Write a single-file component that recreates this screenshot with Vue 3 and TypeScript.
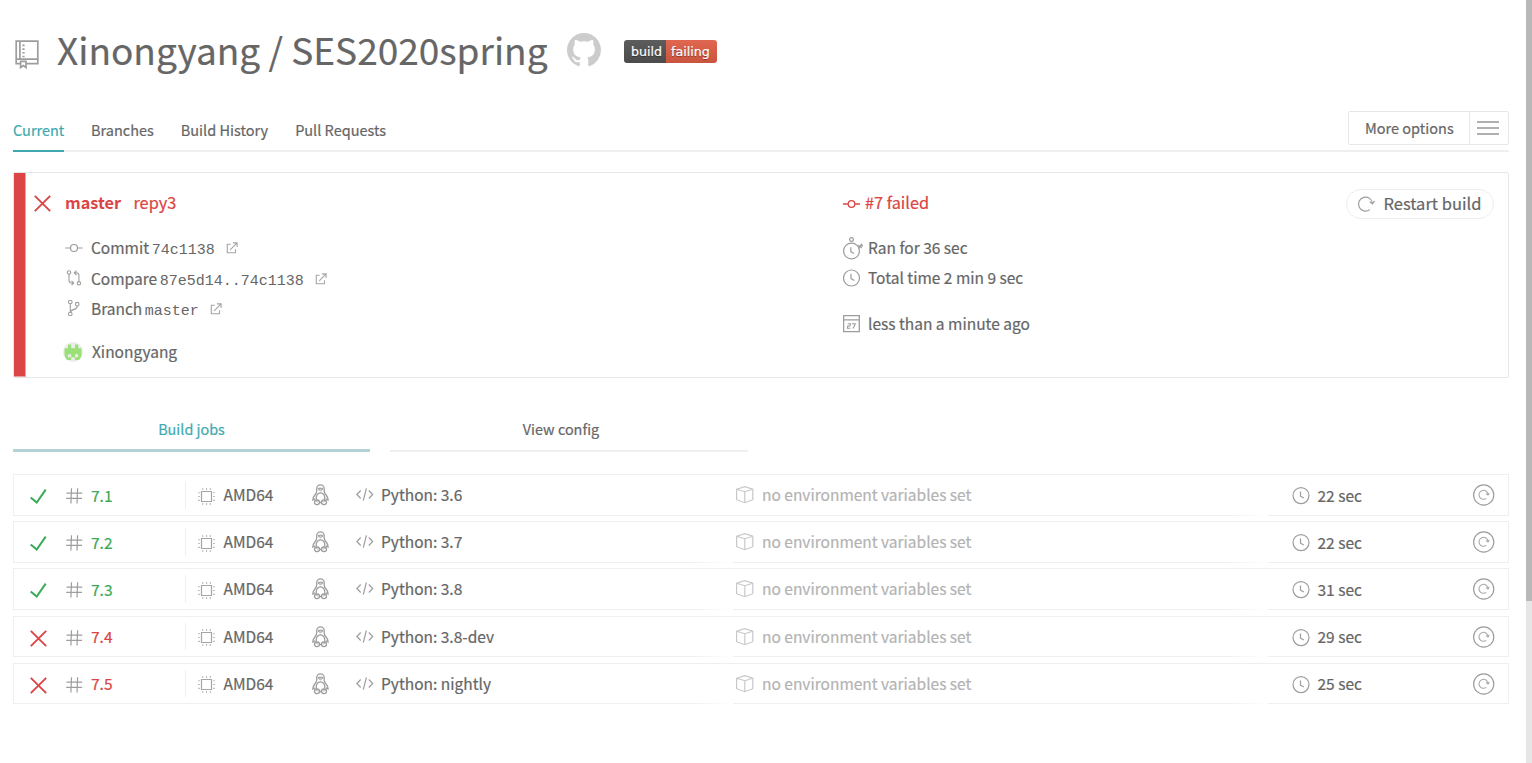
<script setup lang="ts">
interface Job {
  id: string
  passed: boolean
  language: string
  duration: string
}

const tabs: string[] = ['Current', 'Branches', 'Build History', 'Pull Requests']

const jobs: Job[] = [
  { id: '7.1', passed: true, language: 'Python: 3.6', duration: '22 sec' },
  { id: '7.2', passed: true, language: 'Python: 3.7', duration: '22 sec' },
  { id: '7.3', passed: true, language: 'Python: 3.8', duration: '31 sec' },
  { id: '7.4', passed: false, language: 'Python: 3.8-dev', duration: '29 sec' },
  { id: '7.5', passed: false, language: 'Python: nightly', duration: '25 sec' },
]

interface Source {
  kind: 'commit' | 'compare' | 'branch'
  label: string
  value: string
}

const sources: Source[] = [
  { kind: 'commit', label: 'Commit', value: '74c1138' },
  { kind: 'compare', label: 'Compare', value: '87e5d14..74c1138' },
  { kind: 'branch', label: 'Branch', value: 'master' },
]
</script>

<template>
  <div class="page">
    <main class="content">
      <header class="repo">
        <svg class="repo-icon" width="24" height="29" viewBox="0 0 24 29">
          <g fill="none" stroke="#9d9d9d" stroke-width="1.7">
            <path d="M5.5 23.7H1.2V1.2h21.6v22.5H11.5M1.2 19.2h21.6M4.9 1.2v18" />
            <path d="M5.6 21.3h5.4v6.2l-2.7-2-2.7 2z" />
            <path d="M8.500 4.600v13" stroke-dasharray="1.6 2.1" stroke-width="2.2" />
          </g>
        </svg>
        <h1>Xinongyang / SES2020spring</h1>
        <svg class="octocat" width="34" height="34" viewBox="0 0 16 16">
          <path fill="#ccc" d="M8 0C3.58 0 0 3.58 0 8c0 3.54 2.29 6.53 5.47 7.59.4.07.55-.17.55-.38 0-.19-.01-.82-.01-1.49-2.01.37-2.53-.49-2.69-.94-.09-.23-.48-.94-.82-1.13-.28-.15-.68-.52-.01-.53.63-.01 1.08.58 1.23.82.72 1.21 1.87.87 2.33.66.07-.52.28-.87.51-1.07-1.78-.2-3.64-.89-3.64-3.95 0-.87.31-1.59.82-2.15-.08-.2-.36-1.02.08-2.12 0 0 .67-.21 2.2.82.64-.18 1.32-.27 2-.27s1.36.09 2 .27c1.53-1.04 2.2-.82 2.2-.82.44 1.1.16 1.92.08 2.12.51.56.82 1.27.82 2.15 0 3.07-1.87 3.75-3.65 3.95.29.25.54.73.54 1.48 0 1.07-.01 1.93-.01 2.2 0 .21.15.46.55.38A8.01 8.01 0 0 0 16 8c0-4.42-3.58-8-8-8z" />
        </svg>
        <span class="badge"><span class="badge-key">build</span><span class="badge-value">failing</span></span>
      </header>

      <nav class="tabs">
        <a v-for="(tab, i) in tabs" :key="tab" class="tab" :class="{ active: i === 0 }">{{ tab }}</a>
        <div class="options">
          <span class="options-label">More options</span>
          <span class="burger"><i /><i /><i /></span>
        </div>
      </nav>

      <section class="card">
        <div class="stripe" />
        <svg class="card-status" width="17" height="17" viewBox="0 0 17 17">
          <path d="M.8.8l15.4 15.4M16.2.8L.8 16.2" fill="none" stroke="#db4545" stroke-width="1.9" />
        </svg>
        <div class="card-left">
          <div class="line headline"><b>master</b><span>repy3</span></div>
          <div v-for="s in sources" :key="s.kind" class="line source" :class="s.kind">
            <span class="slot">
              <svg v-if="s.kind === 'commit'" width="18" height="16" viewBox="0 0 18 16">
                <g fill="none" stroke="#9d9d9d" stroke-width="1.2"><circle cx="9" cy="8" r="3.5" /><path d="M.2 8h5.3M12.5 8h5.2" /></g>
              </svg>
              <svg v-else-if="s.kind === 'compare'" width="18" height="16" viewBox="0 0 18 16">
                <g fill="none" stroke="#9d9d9d" stroke-width="1.1">
                  <circle cx="4" cy="2.5" r="1.7" /><circle cx="13.9" cy="13.3" r="1.7" />
                  <path d="M4 4.2v6.3q0 2.5 2.8 2.5h1.6M6.5 10.8l2.2 2.2-2.2 2.2M13.9 11.6V5.3q0-2.5-2.8-2.5H9.5M11.5.6L9.3 2.8l2.2 2.2" />
                </g>
              </svg>
              <svg v-else width="18" height="18" viewBox="0 0 18 18">
                <g fill="none" stroke="#9d9d9d" stroke-width="1.1">
                  <circle cx="5.3" cy="3" r="1.8" /><circle cx="5.3" cy="15" r="1.8" /><circle cx="12.2" cy="5.2" r="1.8" />
                  <path d="M5.3 4.8v8.4M12.2 7q0 2.7-3.2 3.4t-3.4 2.8" />
                </g>
              </svg>
            </span>
            <span>{{ s.label }}</span><code>{{ s.value }}</code>
            <svg class="external" width="12" height="12" viewBox="0 0 12 12">
              <path d="M4.7 2.2H1.3v8.6h8.2V7.3M4.2 7.8l6.600-6.600M6.900.900h4.200v4.200" fill="none" stroke="#a5a5a5" stroke-width="1.1" />
            </svg>
          </div>
          <div class="line user">
            <svg class="avatar" width="20" height="20" viewBox="0 0 20 20">
              <circle cx="10" cy="10" r="10" fill="#ececec" />
              <path fill="#9bdf77" d="M5 2.500h3.200v3.800h3.800V2.500h3.200v3.800h3.300v6.700q-.6 3.300-2.600 5h-4V15.500H8.200V18H4.200q-2-1.700-2.700-5V6.300H5z" />
              <path fill="#ececec" d="M5 12.300h3.200v2.900H5zM12 12.300h3.200v2.900H12zM8.600 15.500h2.800v4H8.600z" />
            </svg>
            <span>Xinongyang</span>
          </div>
        </div>
        <div class="card-right">
          <div class="line failed">
            <svg width="18" height="16" viewBox="0 0 18 16">
              <g fill="none" stroke="#db4545" stroke-width="1.3"><circle cx="8.500" cy="8" r="3.300" /><path d="M0 8h5.200M11.800 8H17" /></g>
            </svg>
            <span>#7 failed</span>
          </div>
          <div class="line ran">
            <svg width="21" height="23" viewBox="0 0 21 23">
              <g fill="none" stroke="#9d9d9d" stroke-width="1.200">
                <circle cx="8.500" cy="14" r="7.900" /><circle cx="8.500" cy="2.500" r="1.900" />
                <path d="M7.800 10.300v4.300l3.200 1.900M15 8.300l3.800 2.700M15.500 11.300l3-4.300M18 6.800l1.500 1.500M17 9l2.800-.200" />
              </g>
            </svg>
            <span>Ran for 36 sec</span>
          </div>
          <div class="line total">
            <svg width="18" height="18" viewBox="0 0 18 18">
              <g fill="none" stroke="#9d9d9d" stroke-width="1.200"><circle cx="8.500" cy="9" r="8" /><path d="M8 4.800v4.800l3.300 1.900" /></g>
            </svg>
            <span>Total time 2 min 9 sec</span>
          </div>
          <div class="line finished">
            <svg width="18" height="18" viewBox="0 0 18 18">
              <path d="M.600.700h15.700v15.900H.600zM.600 4.900h15.700" fill="none" stroke="#9d9d9d" stroke-width="1.300" />
              <path d="M4.700 8.700h2.800l-.4 2-2.300.4-.5 2.200h3M9 8.700h3.300l-2.300 4.700" fill="none" stroke="#9d9d9d" stroke-width="1.100" />
            </svg>
            <span>less than a minute ago</span>
          </div>
        </div>
        <button class="restart">
          <svg width="18" height="18" viewBox="0 0 18 18">
            <path d="M12.800 14.600A7 7 0 1 1 15.500 8.600M12.600 6.600l2.900 2.300 2-3" fill="none" stroke="#9d9d9d" stroke-width="1.200" />
          </svg>
          <span>Restart build</span>
        </button>
      </section>

      <nav class="subtabs">
        <a class="subtab selected">Build jobs</a>
        <a class="subtab">View config</a>
      </nav>

      <ul class="jobs">
        <li v-for="job in jobs" :key="job.id" class="job" :class="job.passed ? 'passed' : 'errored'">
          <span class="cell status">
            <svg width="17" height="17" viewBox="0 0 17 17">
              <path v-if="job.passed" d="M.700 9.500l6 5L15.700 1.700" fill="none" stroke="#39aa56" stroke-width="2" />
              <path v-else d="M.800.800l15.400 15.400M16.200.800L.800 16.200" fill="none" stroke="#db4545" stroke-width="1.900" />
            </svg>
          </span>
          <span class="cell number">
            <svg width="17" height="16" viewBox="0 0 17 16">
              <path d="M5.500.300L4.900 15.500M11.600.300L11 15.500M.500 5.200h15.800M.200 10.400H16" fill="none" stroke="#9d9d9d" stroke-width="1.200" />
            </svg>
            <span>{{ job.id }}</span>
          </span>
          <span class="cell arch">
            <svg width="18" height="18" viewBox="0 0 18 18">
              <path d="M3.500 3.500h10v10h-10z" fill="none" stroke="#a5a5a5" stroke-width="1.200" />
              <g fill="none" stroke="#a5a5a5" stroke-width="1.400" stroke-dasharray="1.100 2.700">
                <path d="M4.200 1h8.900M4.200 16h8.900M1 4.200v8.900M16 4.200v8.900" />
              </g>
            </svg>
            <span>AMD64</span>
          </span>
          <span class="cell os">
            <svg width="17" height="22" viewBox="0 0 17 22">
              <g fill="none" stroke="#9d9d9d" stroke-width="1.300">
                <path d="M4.700 7.300V4.600a3.700 3.700 0 0 1 7.500 0v2.700q.4 2.300 2.200 4.200 1.800 2 1.700 4.500l-2.300-1.200M4.700 7.300q-.4 2.300-2.200 4.200Q.700 13.500.800 16l2.300-1.200" />
                <path d="M6.300 4.200h4.400v1l-2.200 1.600-2.200-1.600zM6.200 5h4.600" stroke-width="1" />
                <path d="M4.500 15.700Q3.500 12 6 9.700q2.500-1.800 5 0 2.500 2.300 1.500 6M7 18.500h3" />
                <ellipse cx="5" cy="18.300" rx="2.500" ry="2.300" /><ellipse cx="12" cy="18.300" rx="2.500" ry="2.300" />
                <path d="M4.200 16.500l1.300 1.800M12.800 16.500l-1.300 1.800" stroke-width="1" />
              </g>
            </svg>
          </span>
          <span class="cell language">
            <svg width="18" height="14" viewBox="0 0 18 14">
              <path d="M4.700 2.500L.900 6.500l3.800 4M12.800 2.500l3.900 4-3.900 4M10.400.300L7.300 12.700" fill="none" stroke="#9d9d9d" stroke-width="1.200" />
            </svg>
            <span>{{ job.language }}</span>
          </span>
          <span class="cell env">
            <svg width="18" height="18" viewBox="0 0 18 18">
              <path d="M.600 3.200L8.800.700l8 2.500v10.500l-8 3-8.200-3zM.600 3.200l8.200 2.500 8-2.500M8.800 5.700v11" fill="none" stroke="#c8c8c8" stroke-width="1.200" />
            </svg>
            <span>no environment variables set</span>
          </span>
          <span class="cell time">
            <svg width="18" height="18" viewBox="0 0 18 18">
              <g fill="none" stroke="#9d9d9d" stroke-width="1.200"><circle cx="9" cy="8.600" r="8" /><path d="M8.500 4.400v4.800l3.300 1.900" /></g>
            </svg>
            <span>{{ job.duration }}</span>
          </span>
          <span class="cell again">
            <svg width="22" height="22" viewBox="0 0 22 22">
              <g fill="none" stroke="#9d9d9d" stroke-width="1.200">
                <circle cx="10.700" cy="11" r="10.100" />
                <path d="M13.200 14.400A4.500 4.500 0 1 1 15 10.600M13 9.600l2 1.400 1.300-1.900" stroke-width="1.100" stroke="#aaa" />
              </g>
            </svg>
          </span>
        </li>
      </ul>
    </main>
    <div class="scrollbar"><div class="thumb" /></div>
  </div>
</template>

<style>
html,
body {
  margin: 0;
  background: #fff;
}
</style>

<style scoped>
.page {
  display: flex;
  height: 763px;
  overflow: hidden;
  color: #666;
  font-family: "Noto Sans CJK SC", "Noto Sans", sans-serif;
  font-size: 15.5px;
  line-height: 24px;
  -webkit-text-stroke: 0.2px currentColor;
}
.page svg {
  display: block;
  flex: none;
}
.content {
  width: 1496px;
  margin: 0 17px 0 13px;
  flex: none;
}
.scrollbar {
  width: 6px;
  background: #e6e6e6;
}
.thumb {
  height: 601px;
  background: #b8b8b8;
}

.repo {
  display: flex;
  align-items: flex-start;
  height: 92px;
  padding-top: 19px;
}
.repo-icon {
  margin: 21px 0 0 2px;
}
h1 {
  width: 510px;
  margin: 0 0 0 18px;
  font-size: 37px;
  font-weight: 400;
  line-height: 60px;
  white-space: nowrap;
}
.octocat {
  margin-top: 14px;
}
.badge {
  display: flex;
  width: 93px;
  height: 23px;
  margin: 21px 0 0 23px;
  border-radius: 3px;
  overflow: hidden;
  color: #fff;
  font: 12.6px/23px "DejaVu Sans", sans-serif;
  text-shadow: 0 1px 1px rgba(0, 0, 0, 0.4);
}
.badge-key {
  width: 35px;
  padding-left: 7px;
  background: linear-gradient(#5c5c5c, #4c4c4c);
}
.badge-value {
  flex: 1;
  padding-left: 5px;
  background: linear-gradient(#e0664f, #c9553f);
}

.tabs {
  display: flex;
  height: 39px;
  border-bottom: 2px solid #efefef;
  font-size: 14.5px;
}
.tab {
  height: 32px;
  padding-top: 7px;
  margin-right: 27px;
}
.tab.active {
  color: #3eaaaf;
  width: 51px;
  white-space: nowrap;
  border-bottom: 2px solid #3eaaaf;
}
.options {
  display: flex;
  box-sizing: border-box;
  width: 161px;
  height: 34px;
  margin-left: auto;
  border: 1px solid #e7e7e7;
  border-radius: 2px;
  font-size: 14.5px;
  line-height: 32px;
}
.options-label {
  width: 104px;
  padding-left: 16px;
  border-right: 1px solid #e7e7e7;
}
.burger {
  display: flex;
  flex-direction: column;
  gap: 4px;
  padding: 9px 0 0 7px;
}
.burger i {
  width: 22px;
  height: 2px;
  background: #b0b0b0;
}

.card {
  display: flex;
  align-items: flex-start;
  box-sizing: border-box;
  height: 206px;
  margin-top: 20px;
  border: 1px solid #e7e7e7;
  border-radius: 2px;
}
.stripe {
  width: 11px;
  height: 203px;
  margin-right: 1px;
  background: #db4545;
  box-shadow: 0 0 0.500px 0.500px rgba(219, 69, 69, 0.5);
}
.card-status {
  margin: 22px 0 0 7.600px;
}
.card-left {
  width: 778px;
  margin: 17px 0 0 14.400px;
}
.line {
  display: flex;
  height: 24px;
  white-space: nowrap;
}
.headline {
  color: #db4545;
  font-size: 16.3px;
}
.headline b {
  width: 68.500px;
  -webkit-text-stroke-width: 0;
}
.slot {
  width: 26px;
}
.commit {
  margin-top: 21px;
}
.compare {
  margin-top: 7px;
}
.branch {
  margin-top: 6px;
}
.commit .slot {
  padding-top: 5px;
}
.compare .slot {
  padding-top: 4px;
}
.branch .slot {
  padding-top: 3px;
}
.source {
  align-items: baseline;
}
.source .slot {
  box-sizing: border-box;
}
.source .slot,
.source .external {
  align-self: flex-start;
}
code {
  margin-left: 2.600px;
  font: 15px/24px "Liberation Mono", monospace;
  -webkit-text-stroke-width: 0;
}
.external {
  margin: 7px 0 0 11px;
}
.user {
  margin-top: 19px;
}
.avatar {
  margin: 3px 8.500px 0 -1.500px;
}
.card-right {
  width: 400px;
  margin-top: 17px;
}
.failed {
  color: #db4545;
  font-size: 16.3px;
}
.failed svg {
  margin: 6px 4px 0 0;
}
.ran {
  margin-top: 21px;
}
.ran svg {
  margin: 2px 4px 0 0;
}
.total {
  margin-top: 6px;
}
.total svg,
.finished svg {
  margin: 4px 7px 0 0;
}
.finished {
  margin-top: 22px;
}
.restart {
  display: flex;
  box-sizing: border-box;
  width: 148px;
  height: 30px;
  margin: 16px 14px 0 auto;
  padding: 0 0 0 10px;
  border: 1px solid #ededed;
  border-radius: 15px;
  background: #fff;
  color: #666;
  font: inherit;
  font-size: 16.500px;
  line-height: 26px;
  white-space: nowrap;
}
.restart svg {
  margin: 5px 8.500px 0 0;
}

.subtabs {
  display: flex;
  gap: 20px;
  height: 40px;
  margin-top: 34px;
  font-size: 14.4px;
}
.subtab {
  box-sizing: border-box;
  width: 358px;
  height: 40px;
  padding-top: 5px;
  border-bottom: 2px solid #efefef;
  text-align: center;
}
.subtab.selected {
  width: 357px;
  color: #3eaaaf;
  border-bottom: 3px solid #b4d3d6;
}
.subtab:last-child {
  padding-right: 16px;
}

.jobs {
  margin: 22px 0 0;
  padding: 0;
  list-style: none;
}
.job {
  position: relative;
  display: flex;
  box-sizing: border-box;
  height: 42px;
  margin-bottom: 5px;
  border: 1px solid #efefef;
  line-height: 38px;
  white-space: nowrap;
}
.job.errored {
  height: 41px;
  margin: 6px 0 0;
}
/* Fades at the right edge of the wide columns soften the row's bottom line. */
.job::before,
.job::after {
  content: "";
  position: absolute;
  bottom: -1px;
  width: 44px;
  height: 1px;
  background: linear-gradient(to right, rgba(255, 255, 255, 0), #fff);
}
.job::before {
  left: 675px;
}
.job::after {
  left: 1210px;
}
.job:first-child::before {
  display: none;
}
.cell {
  display: flex;
}
.status {
  width: 36px;
  padding-left: 16px;
}
.status svg {
  margin-top: 13px;
}
.number {
  width: 119px;
}
.number svg {
  margin: 13px 8px 0 0;
}
.passed .number > span,
.passed .time > span {
  padding-top: 1px;
}
.passed .number {
  color: #39aa56;
}
.errored .number {
  color: #db4545;
}
.arch {
  height: 28px;
  width: 115px;
  margin-top: 6px;
  padding-left: 12px;
  border-left: 1px solid #efefef;
  line-height: 26px;
}
.errored .arch {
  height: 27px;
}
.arch svg {
  margin: 7px 7.500px 0 0;
}
.os {
  width: 43px;
}
.os svg {
  margin: 9px 0 0 -1.500px;
}
.language {
  width: 380px;
}
.language svg {
  margin: 13px 7px 0 0;
}
.env {
  width: 556px;
  color: #b3b3b3;
}
.env svg {
  margin: 11px 8px 0 0;
}
.time {
  width: 180.500px;
}
.time svg {
  margin: 12px 7.500px 0 0;
}
.again svg {
  margin-top: 9px;
}
.errored .status svg,
.errored .number svg {
  margin-top: 12.500px;
}
.errored .arch svg {
  margin-top: 6px;
}
.errored .os svg,
.errored .again svg {
  margin-top: 8.500px;
}
.errored .language svg {
  margin-top: 12.500px;
}
.errored .time svg {
  margin-top: 11.500px;
}
</style>
